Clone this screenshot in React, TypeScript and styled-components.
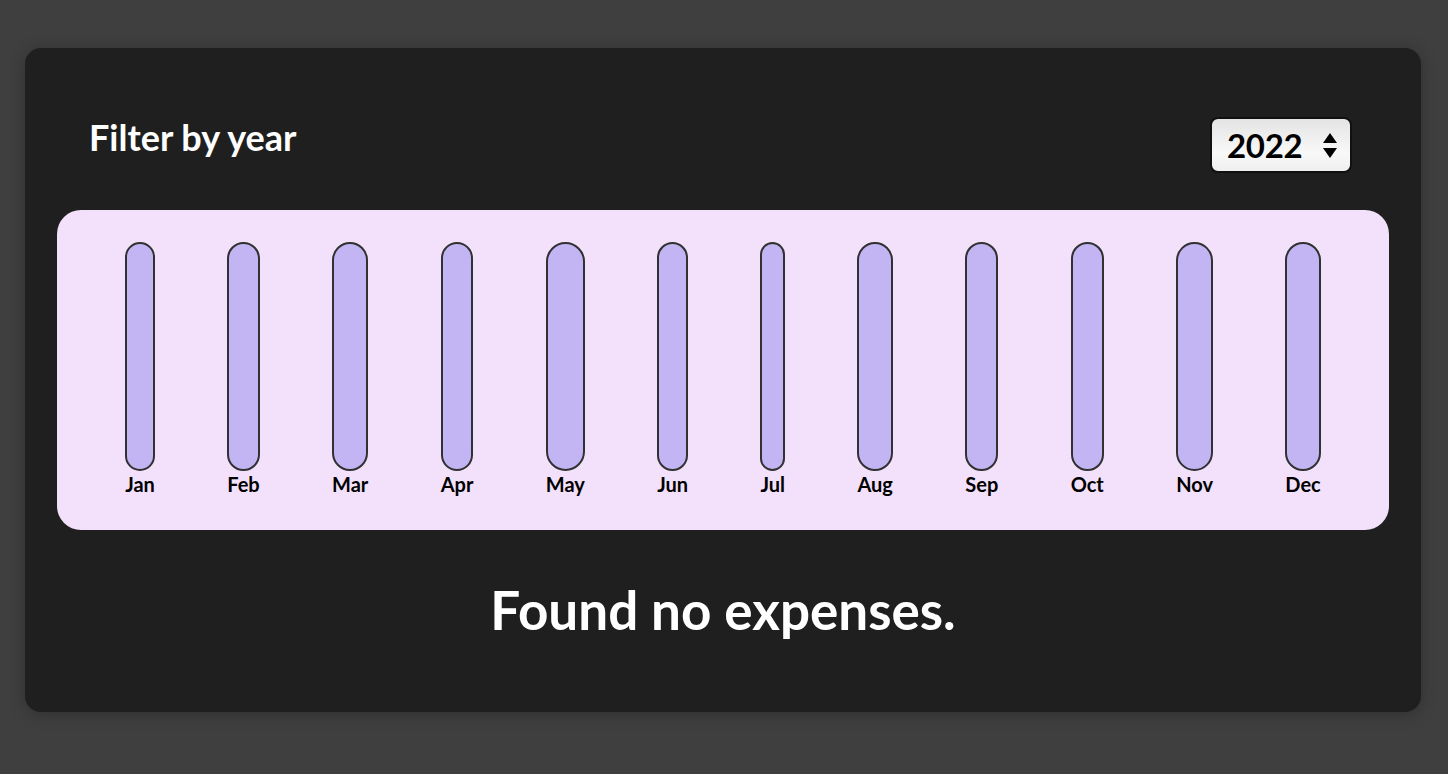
import React from "react";
import styled, { createGlobalStyle } from "styled-components";

const GlobalStyle = createGlobalStyle`
  html, body { margin: 0; padding: 0; }
  body {
    background: #3f3f3f;
    font-family: "Lato", "Open Sans", sans-serif;
    min-height: 774px;
  }
`;

const Page = styled.div`
  padding: 48px 27px 62px 25px;
`;

const Card = styled.section`
  box-sizing: border-box;
  width: 1396px;
  padding: 32px;
  background: #1f1f1f;
  border-radius: 16px;
  box-shadow: 0 2px 16px rgba(0, 0, 0, 0.25);
`;

const FilterControl = styled.div`
  display: flex;
  align-items: center;
  justify-content: space-between;
  margin: 32px 0;
  padding: 0 37px 0 32px;
  height: 66px;
  color: #fff;
`;

const FilterLabel = styled.label`
  font-weight: 700;
  font-size: 36px;
  line-height: 40px;
  margin-bottom: 16px;
`;

const SelectWrap = styled.div`
  position: relative;
  width: 142px;
  height: 56px;
`;

const Select = styled.select`
  appearance: none;
  -webkit-appearance: none;
  box-sizing: border-box;
  width: 100%;
  height: 100%;
  padding: 0 0 0 15px;
  border: 2px solid #111;
  border-radius: 8px;
  background: linear-gradient(#e4e4e4, #f8f8f8 65%, #efefef);
  color: #000;
  font-family: "Lato", "Open Sans", sans-serif;
  font-weight: 700;
  font-size: 33px;
  letter-spacing: -0.3px;
  outline: none;
`;

const Arrows = styled.svg`
  position: absolute;
  right: 14px;
  top: 14px;
  pointer-events: none;
`;

const Chart = styled.div`
  box-sizing: border-box;
  height: 320px;
  padding: 32px;
  border-radius: 24px;
  background: #f3e1fc;
  display: flex;
  justify-content: space-around;
`;

const Bar = styled.div`
  height: 100%;
  display: flex;
  flex-direction: column;
  align-items: center;
`;

const BarInner = styled.div`
  box-sizing: border-box;
  flex: 1;
  width: 100%;
  border: 2px solid #313131;
  border-radius: 24px;
  background: #c3b4f3;
  overflow: hidden;
`;

const BarLabel = styled.div`
  font-weight: 700;
  font-size: 20px;
  line-height: 27px;
  color: #000;
  text-align: center;
  white-space: nowrap;
`;

const Fallback = styled.h2`
  margin: 50px 0 40px;
  color: #fff;
  text-align: center;
  font-weight: 700;
  font-size: 53px;
  line-height: 60px;
`;

const months = ["Jan", "Feb", "Mar", "Apr", "May", "Jun", "Jul", "Aug", "Sep", "Oct", "Nov", "Dec"];

export default function App() {
  return (
    <>
      <GlobalStyle />
      <Page>
        <Card>
          <FilterControl>
            <FilterLabel>Filter by year</FilterLabel>
            <SelectWrap>
              <Select defaultValue="2022">
                <option value="2022">2022</option>
                <option value="2021">2021</option>
                <option value="2020">2020</option>
                <option value="2019">2019</option>
              </Select>
              <Arrows width="16" height="28" viewBox="0 0 16 28">
                <path d="M8 2 L15 12 L1 12 Z" fill="#000" />
                <path d="M1 17 L15 17 L8 27 Z" fill="#000" />
              </Arrows>
            </SelectWrap>
          </FilterControl>
          <Chart>
            {months.map((m) => (
              <Bar key={m}>
                <BarInner />
                <BarLabel>{m}</BarLabel>
              </Bar>
            ))}
          </Chart>
          <Fallback>Found no expenses.</Fallback>
        </Card>
      </Page>
    </>
  );
}
